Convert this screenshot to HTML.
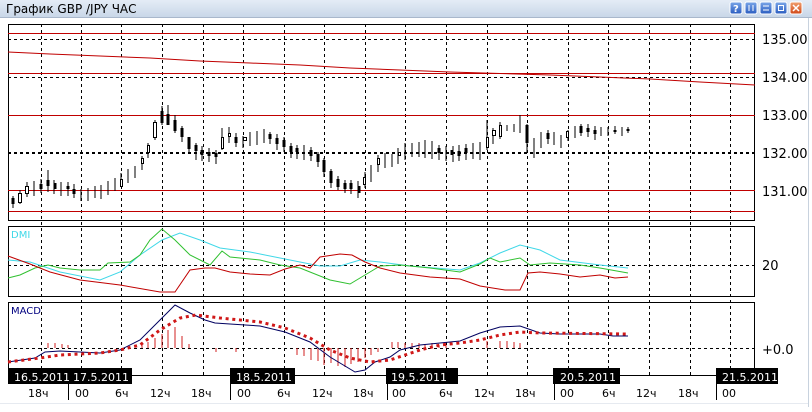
<!DOCTYPE html>
<html><head><meta charset="utf-8"><style>
body{margin:0;width:812px;height:407px;overflow:hidden;background:#fff;font-family:"Liberation Sans","DejaVu Sans",sans-serif}
</style></head><body>
<svg width="812" height="407" xmlns="http://www.w3.org/2000/svg" font-family="DejaVu Sans, Liberation Sans, sans-serif">
<defs><linearGradient id="tb" x1="0" y1="0" x2="0" y2="1"><stop offset="0" stop-color="#e4ecf6"/><stop offset="1" stop-color="#c9d7e8"/></linearGradient>
<linearGradient id="bt" x1="0" y1="0" x2="0" y2="1"><stop offset="0" stop-color="#7aa6e8"/><stop offset="1" stop-color="#2a5cc0"/></linearGradient>
<linearGradient id="bx" x1="0" y1="0" x2="0" y2="1"><stop offset="0" stop-color="#f0a070"/><stop offset="1" stop-color="#d04818"/></linearGradient></defs>
<rect x="0" y="0" width="812" height="17" fill="url(#tb)"/>
<line x1="0" y1="17.5" x2="812" y2="17.5" stroke="#a9b8cc"/>
<text x="6" y="13" font-size="12" fill="#000">График GBP /JPY  ЧАС</text>
<g stroke="#fff" stroke-width="1">
<rect x="730" y="2" width="12" height="12" rx="2" fill="url(#bt)"/><text x="733" y="12" font-size="10" fill="#fff" stroke="none" font-weight="bold">?</text>
<rect x="745" y="2" width="12" height="12" rx="2" fill="url(#bt)"/><line x1="749" y1="5" x2="749" y2="11"/><line x1="753" y1="5" x2="753" y2="11"/>
<rect x="760" y="2" width="12" height="12" rx="2" fill="url(#bt)"/><line x1="763" y1="6" x2="769" y2="6"/><line x1="763" y1="10" x2="769" y2="10"/>
<rect x="775" y="2" width="12" height="12" rx="2" fill="url(#bt)"/><rect x="778.5" y="5.5" width="5" height="5" fill="none"/>
<rect x="790" y="2" width="12" height="12" rx="2" fill="url(#bx)"/><line x1="793" y1="5" x2="799" y2="11" stroke-width="1.5"/><line x1="799" y1="5" x2="793" y2="11" stroke-width="1.5"/>
</g>
<line x1="808.5" y1="18" x2="808.5" y2="407" stroke="#c8d2de"/>
<line x1="0" y1="403.5" x2="808" y2="403.5" stroke="#e6eaf0"/>

<g stroke="#000" stroke-dasharray="3 3" stroke-width="1">
<path d="M41.5 24V378M81.5 24V378M121.5 24V378M162.5 24V378M203.5 24V378M243.5 24V378M284.5 24V378M324.5 24V378M365.5 24V378M405.5 24V378M446.5 24V378M487.5 24V378M527.5 24V378M568.5 24V378M608.5 24V378M649.5 24V378M690.5 24V378M730.5 24V378"/>
<path d="M8 39.5H755M8 77.5H755"/>
<path d="M8 153H755" stroke-width="2"/>
<path d="M8 265.5H755M8 348.5H755"/>
</g>
<rect x="8.5" y="24.5" width="746" height="196" fill="none" stroke="#000"/>
<g stroke="#c00000" stroke-width="1">
<path d="M8 33.5H755M8 73.5H755M8 115.5H755M8 190.5H755M8 211.5H755"/>
<path d="M8 52 L50 54 L100 56 L150 58 L200 61 L250 63 L300 65 L350 68 L400 70 L450 72 L500 73.5 L550 75 L600 77 L650 79 L700 82 L755 85" fill="none"/>
</g>
<path stroke="#000" fill="none" d="M13 196V208M20 190V204M27 182V197M34 181V196M41 179V193M48 170V192M54 180V194M61 182V196M68 182V196M74 184V198M81 189V201M88 188V201M95 186V198M101 185V199M108 181V195M115 178V191M121 173V187M128 169V183M135 166V178M142 156V170M148 143V158M155 120V140M162 106V125M168 105V124M175 115V133M182 126V142M189 137V153M196 143V160M202 146V161M209 148V162M216 150V164M222 128V150M229 127V143M236 133V147M243 136V148M250 132V146M257 131V145M264 129V143M270 132V144M277 134V150M284 137V152M291 143V158M297 145V159M304 145V160M311 147V161M318 152V167M324 158V177M331 169V188M338 176V190M345 180V193M351 180V194M358 181V198M365 172V188M371 165V182M378 155V172M385 153V168M392 154V167M398 148V164M405 143V160M412 143V157M419 142V157M425 140V158M432 141V159M439 145V160M446 146V161M453 146V162M459 145V161M466 144V160M473 143V159M480 142V160M487 120V150M493 128V144M500 122V139M507 125V131M514 124V132M520 115V133M527 124V153M534 138V158M541 132V148M548 130V144M554 132V145M561 135V148M568 130V141M575 126V138M581 124V136M588 124V137M595 126V140M601 127V136M608 127V136M615 126V134M622 127V136M628 127V133"/>
<path fill="#000" d="M11.5 198h3v6h-3zM39.5 184h3v5h-3zM46.5 180h3v6h-3zM53.5 183h3v6h-3zM66.5 186h3v3h-3zM72.5 189h3v5h-3zM160.5 111h3v12h-3zM166.5 114h3v11h-3zM173.5 120h3v11h-3zM180.5 128h3v9h-3zM187.5 137h3v12h-3zM194.5 145h3v6h-3zM200.5 150h3v5h-3zM207.5 152h3v4h-3zM214.5 153h3v4h-3zM234.5 137h3v6h-3zM268.5 134h3v5h-3zM275.5 138h3v6h-3zM282.5 140h3v7h-3zM289.5 146h3v6h-3zM295.5 148h3v4h-3zM309.5 150h3v6h-3zM316.5 154h3v8h-3zM322.5 160h3v12h-3zM329.5 171h3v12h-3zM336.5 179h3v8h-3zM343.5 183h3v6h-3zM349.5 183h3v6h-3zM357.5 186h3v7h-3zM437.5 148h3v5h-3zM450.5 150h3v5h-3zM457.5 151h3v5h-3zM464.5 148h3v5h-3zM525.5 125h3v18h-3zM546.5 133h3v6h-3zM579.5 126h3v7h-3zM586.5 128h3v4h-3zM593.5 130h3v4h-3zM613.5 130h3v2h-3zM626.5 129h3v2h-3z"/>
<path fill="#fff" stroke="#000" d="M18.5 193.5h3v9h-3zM25.5 186.5h3v7h-3zM120.5 179.5h2v7h-2zM141.5 158.5h2v5h-2zM147.5 145.5h2v7h-2zM153.5 122.5h3v15h-3zM221.5 137.5h2v11h-2zM228.5 133.5h2v3h-2zM243.5 137.5h3v3h-3zM363.5 177.5h2v7h-2zM377.5 158.5h2v6h-2zM398.5 152.5h2v3h-2zM486.5 137.5h2v10h-2zM492.5 130.5h3v5h-3zM499.5 125.5h2v11h-2zM566.5 131.5h2v6h-2z"/>
<g font-size="13" fill="#000"><text x="762" y="44">135.00</text><text x="762" y="82">134.00</text><text x="762" y="120">133.00</text><text x="762" y="158">132.00</text><text x="762" y="196">131.00</text><text x="762" y="270">20</text><text x="762" y="354">+0.0</text></g>

<rect x="8.5" y="226.5" width="746" height="70" fill="none" stroke="#000"/>
<text x="11" y="238" font-size="10" fill="#40d8e8">DMI</text>
<g fill="none" stroke-width="1">
<polyline stroke="#40d8e8" points="8,260 30,262 60,272 100,280 120,272 140,255 162,240 180,233 200,240 220,248 250,252 280,258 300,262 320,266 340,266 360,260 380,262 410,266 460,270 480,263 500,253 520,245 540,250 560,260 600,265 628,268"/>
<polyline stroke="#30c030" points="8,278 20,275 35,268 48,265 60,268 80,270 100,270 108,263 130,262 140,255 150,240 162,229 175,240 190,255 210,265 222,251 230,257 260,260 280,265 300,268 330,280 350,284 370,272 380,266 400,265 430,268 460,272 480,264 490,258 500,262 520,258 530,265 550,263 580,265 600,268 628,273"/>
<polyline stroke="#c00000" points="8,256 30,264 50,272 80,280 120,285 160,292 175,292 190,270 205,268 215,268 230,272 250,274 270,275 285,269 300,265 310,268 320,257 340,254 352,255 365,262 380,268 400,273 430,277 460,279 480,286 505,290 520,290 528,273 540,272 560,274 580,277 600,275 615,278 628,277"/>
</g>

<path d="M8.5 378V302.5H754.5V378" fill="none" stroke="#000"/>
<text x="11" y="314" font-size="10" fill="#000080">MACD</text>
<path stroke="#d02020" d="M48 348V343M55 348V343M62 348V344M68 348V345M142 348V344M148 348V342M155 348V338M162 348V334M168 348V330M175 348V327M182 348V336M189 348V344M216 348V352M236 348V352M297 348V355M304 348V356M311 348V360M318 348V361M324 348V365M331 348V363M338 348V366M345 348V367M351 348V364M358 348V362M365 348V358M371 348V355M378 348V352M392 348V342M398 348V342M405 348V343M412 348V343M419 348V343M425 348V344M432 348V343M439 348V345M446 348V345M487 348V341M500 348V341M507 348V341M514 348V342M520 348V343"/>
<polyline fill="none" stroke="#000060" points="8,362 35,358 45,352 60,351 100,353 120,350 140,340 160,320 175,305 190,313 205,320 215,323 230,324 260,326 285,332 310,342 330,357 355,372 365,370 375,362 390,357 400,350 420,345 440,343 460,341 480,333 500,327 520,326 540,333 560,334 600,334 613,336 628,336"/>
<polyline fill="none" stroke="#d01818" stroke-width="3" stroke-dasharray="3 3.7" points="8,362 40,358 60,355 100,353 120,350 140,345 160,330 180,318 196,315 220,318 260,322 285,328 310,338 330,350 350,358 370,362 390,360 405,355 420,350 440,345 460,343 480,340 500,335 520,332 540,333 628,334"/>

<line x1="8" y1="375.5" x2="755" y2="375.5" stroke="#000"/>
<g fill="#000"><rect x="8" y="368" width="124" height="16"/><rect x="230" y="368" width="65" height="16"/><rect x="386" y="368" width="72" height="16"/><rect x="553" y="368" width="67" height="16"/><rect x="716" y="368" width="62" height="16"/></g>
<g stroke="#000"><path d="M68.5 384V400M230.5 384V400M387.5 384V400M554.5 384V400M716.5 384V400"/></g>
<g fill="#fff" font-size="11"><text x="14" y="381">16.5.2011</text><text x="73" y="381">17.5.2011</text><text x="236" y="381">18.5.2011</text><text x="391" y="381">19.5.2011</text><text x="560" y="381">20.5.2011</text><text x="722" y="381">21.5.2011</text></g>
<g fill="#000" font-size="11"><text x="28" y="397">18ч</text><text x="75" y="397">00</text><text x="115" y="397">6ч</text><text x="150" y="397">12ч</text><text x="191" y="397">18ч</text><text x="237" y="397">00</text><text x="277" y="397">6ч</text><text x="312" y="397">12ч</text><text x="353" y="397">18ч</text><text x="392" y="397">00</text><text x="439" y="397">6ч</text><text x="474" y="397">12ч</text><text x="515" y="397">18ч</text><text x="560" y="397">00</text><text x="602" y="397">6ч</text><text x="636" y="397">12ч</text><text x="678" y="397">18ч</text><text x="722" y="397">00</text></g>
</svg>
</body></html>
